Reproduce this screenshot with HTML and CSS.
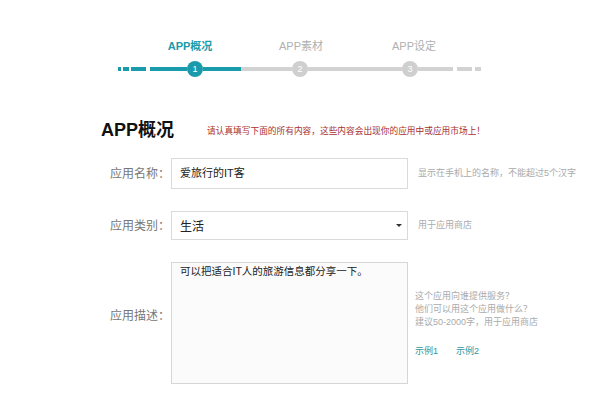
FILE: index.html
```html
<!DOCTYPE html>
<html lang="zh-CN">
<head>
<meta charset="utf-8">
<title>APP概况</title>
<link rel="stylesheet" href="styles.css">
</head>
<body>
<div class="page">
  <div class="stepper">
    <div class="step-labels">
      <span class="step-label active">APP概况</span>
      <span class="step-label">APP素材</span>
      <span class="step-label">APP设定</span>
    </div>
    <div class="track">
      <span class="seg teal w3"></span>
      <span class="seg teal w6 gap2"></span>
      <span class="seg teal w15 gap2"></span>
      <span class="seg teal w37 gap4"></span>
      <span class="dot teal-dot">1</span>
      <span class="seg teal w38"></span>
      <span class="seg gray w51"></span>
      <span class="dot gray-dot">2</span>
      <span class="seg gray w94"></span>
      <span class="dot gray-dot">3</span>
      <span class="seg gray w35"></span>
      <span class="seg gray w15 gap4"></span>
      <span class="seg gray w6 gap3"></span>
    </div>
  </div>

  <div class="heading">
    <h1 class="title">APP概况</h1>
    <p class="notice">请认真填写下面的所有内容，这些内容会出现你的应用中或应用市场上！</p>
  </div>

  <div class="form">
    <div class="row">
      <div class="label">应用名称：</div>
      <div class="field input">爱旅行的IT客</div>
      <div class="hint">显示在手机上的名称，不能超过5个汉字</div>
    </div>
    <div class="row">
      <div class="label">应用类别：</div>
      <div class="field select"><span class="select-value">生活</span><span class="caret"></span></div>
      <div class="hint">用于应用商店</div>
    </div>
    <div class="row">
      <div class="label label-desc">应用描述：</div>
      <div class="field textarea">可以把适合IT人的旅游信息都分享一下。</div>
      <div class="hint hint-block">
        <div class="hint-line">这个应用向谁提供服务？</div>
        <div class="hint-line">他们可以用这个应用做什么？</div>
        <div class="hint-line">建议50-2000字，用于应用商店</div>
        <div class="examples"><span class="example">示例1</span><span class="example">示例2</span></div>
      </div>
    </div>
  </div>
</div>
</body>
</html>
```

FILE: styles.css
```css
html, body {
  margin: 0;
  padding: 0;
  background: #ffffff;
}

body {
  font-family: "Liberation Sans", "Noto Sans CJK SC", sans-serif;
  color: #333;
}

.page {
  width: 600px;
  height: 397px;
  overflow: hidden;
}

/* ---------- stepper ---------- */
.stepper {
  padding-top: 38px;
}

.step-labels {
  display: grid;
  grid-template-columns: 110px 112px 114px;
  margin-left: 135px;
  height: 16px;
  line-height: 16px;
}

.step-label {
  text-align: center;
  font-size: 11px;
  color: #b0b0b0;
}

.step-label.active {
  color: #1a9bab;
  font-weight: bold;
}

.track {
  display: flex;
  align-items: center;
  height: 16px;
  margin-top: 7px;
  margin-left: 118px;
}

.seg {
  height: 4px;
  flex: none;
}

.seg.teal { background: #1a9bab; }
.seg.gray { background: #d2d2d2; }

.w3 { width: 3px; }
.w6 { width: 6px; }
.w15 { width: 15px; }
.w35 { width: 35px; }
.w37 { width: 37px; }
.w38 { width: 38px; }
.w51 { width: 51px; }
.w94 { width: 94px; }

.gap2 { margin-left: 2px; }
.gap3 { margin-left: 3px; }
.gap4 { margin-left: 4px; }

.dot {
  flex: none;
  width: 16px;
  height: 16px;
  border-radius: 50%;
  color: #fff;
  font-size: 9px;
  line-height: 16px;
  text-align: center;
}

.teal-dot { background: #1a9bab; }
.gray-dot { background: #cfcfcf; }

/* ---------- heading ---------- */
.heading {
  display: flex;
  align-items: center;
  margin-top: 41px;
  margin-left: 101px;
  height: 24px;
}

.title {
  margin: 0;
  font-size: 18px;
  line-height: 24px;
  font-weight: bold;
  color: #111;
}

.notice {
  margin: 2px 0 0 33px;
  font-size: 8.7px;
  line-height: 12px;
  color: #a8312f;
}

/* ---------- form ---------- */
.form {
  display: flex;
  flex-direction: column;
  gap: 22px;
  margin-top: 16px;
  margin-left: 110px;
}

.row {
  display: flex;
  align-items: center;
}

.label {
  width: 61px;
  flex: none;
  font-size: 12px;
  line-height: 16px;
  color: #777;
  white-space: nowrap;
}

.label-desc {
  margin-bottom: 14px;
}

.field {
  box-sizing: border-box;
  width: 237px;
  flex: none;
  border: 1px solid #dadada;
  background: #fff;
  padding-left: 8px;
  color: #222;
}

.input {
  height: 31px;
  line-height: 29px;
  font-size: 11px;
}

.select {
  display: flex;
  align-items: center;
  height: 29px;
  font-size: 12px;
}

.select-value {
  flex: 1;
}

.caret {
  width: 0;
  height: 0;
  border-left: 3px solid transparent;
  border-right: 3px solid transparent;
  border-top: 3px solid #333;
  margin-right: 5px;
}

.textarea {
  height: 122px;
  padding-top: 1px;
  font-size: 10.5px;
  line-height: 14px;
  background: #fbfbfb;
  border-color: #d6d6d6;
}

.hint {
  margin-left: 10px;
  font-size: 9px;
  line-height: 13px;
  color: #aaa;
  white-space: nowrap;
}

.hint-block {
  margin-left: 7px;
  margin-top: 1px;
}

.hint-line {
  height: 13px;
}

.examples {
  display: flex;
  gap: 18px;
  margin-top: 16px;
}

.example {
  color: #2f97a0;
  font-size: 9px;
}
```
